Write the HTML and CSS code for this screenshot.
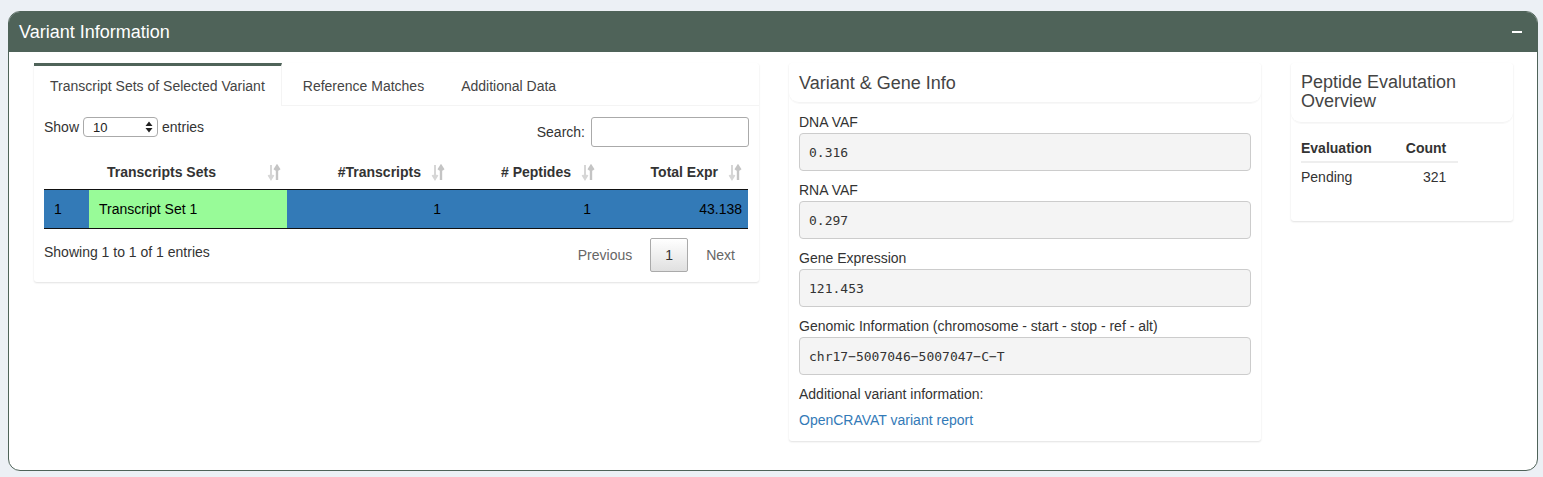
FILE: index.html
```html
<!DOCTYPE html>
<html>
<head>
<meta charset="utf-8">
<link rel="stylesheet" href="styles.css">
</head>
<body>
<div class="box">
  <div class="box-header">
    <h3 class="box-title">Variant Information</h3>
    <span class="collapse-btn"></span>
  </div>
  <div class="box-body">
    <div class="tabbox">
      <ul class="tabs">
        <li class="tab active">Transcript Sets of Selected Variant</li>
        <li class="tab">Reference Matches</li>
        <li class="tab">Additional Data</li>
      </ul>
      <div class="tab-content">
        <div class="dt-top">
          <div class="dt-length">Show <span class="select"><span>10</span><svg width="8" height="12" viewBox="0 0 8 12"><path d="M4 0.5 L7.5 5 H0.5 Z M4 11.5 L7.5 7 H0.5 Z" fill="#222"/></svg></span> entries</div>
          <div class="dt-search">Search: <span class="search-input"></span></div>
        </div>
        <table class="dt">
          <colgroup>
            <col class="c-idx"><col class="c-sets"><col class="c-tr"><col class="c-pep"><col class="c-expr">
          </colgroup>
          <thead>
            <tr>
              <th></th>
              <th class="left sort">Transcripts Sets<svg class="sorticon" width="14" height="17" viewBox="0 0 14 17"><path d="M4 1 V14 M1.5 11 L4 15 L6.5 11" stroke="#d6d6d6" stroke-width="2" fill="none"/><path d="M10 16 V3 M7.5 6 L10 2 L12.5 6" stroke="#c4c4c4" stroke-width="2.4" fill="none"/></svg></th>
              <th class="sort">#Transcripts<svg class="sorticon" width="14" height="17" viewBox="0 0 14 17"><path d="M4 1 V14 M1.5 11 L4 15 L6.5 11" stroke="#d6d6d6" stroke-width="2" fill="none"/><path d="M10 16 V3 M7.5 6 L10 2 L12.5 6" stroke="#c4c4c4" stroke-width="2.4" fill="none"/></svg></th>
              <th class="sort"># Peptides<svg class="sorticon" width="14" height="17" viewBox="0 0 14 17"><path d="M4 1 V14 M1.5 11 L4 15 L6.5 11" stroke="#d6d6d6" stroke-width="2" fill="none"/><path d="M10 16 V3 M7.5 6 L10 2 L12.5 6" stroke="#c4c4c4" stroke-width="2.4" fill="none"/></svg></th>
              <th class="sort">Total Expr<svg class="sorticon" width="14" height="17" viewBox="0 0 14 17"><path d="M4 1 V14 M1.5 11 L4 15 L6.5 11" stroke="#d6d6d6" stroke-width="2" fill="none"/><path d="M10 16 V3 M7.5 6 L10 2 L12.5 6" stroke="#c4c4c4" stroke-width="2.4" fill="none"/></svg></th>
            </tr>
          </thead>
          <tbody>
            <tr class="selected">
              <td class="left">1</td>
              <td class="left green">Transcript Set 1</td>
              <td>1</td>
              <td>1</td>
              <td class="last">43.138</td>
            </tr>
          </tbody>
        </table>
        <div class="dt-bottom">
          <div class="dt-info">Showing 1 to 1 of 1 entries</div>
          <div class="pager">
            <span class="pg disabled">Previous</span>
            <span class="pg current">1</span>
            <span class="pg disabled">Next</span>
          </div>
        </div>
      </div>
    </div>

    <div class="card">
      <div class="card-header"><h3 class="card-title">Variant &amp; Gene Info</h3></div>
      <div class="card-body">
        <div class="field">
          <label>DNA VAF</label>
          <div class="ro">0.316</div>
        </div>
        <div class="field">
          <label>RNA VAF</label>
          <div class="ro">0.297</div>
        </div>
        <div class="field">
          <label>Gene Expression</label>
          <div class="ro">121.453</div>
        </div>
        <div class="field">
          <label>Genomic Information (chromosome - start - stop - ref - alt)</label>
          <div class="ro">chr17−5007046−5007047−C−T</div>
        </div>
        <p class="addl">Additional variant information:</p>
        <a class="link" href="#">OpenCRAVAT variant report</a>
      </div>
    </div>

    <div class="card card-small">
      <div class="card-header"><h3 class="card-title">Peptide Evalutation Overview</h3></div>
      <div class="card-body">
        <table class="eval">
          <thead><tr><th class="l">Evaluation</th><th class="r">Count</th></tr></thead>
          <tbody><tr><td class="l">Pending</td><td class="r">321</td></tr></tbody>
        </table>
      </div>
    </div>
  </div>
</div>
</body>
</html>
```
FILE: styles.css
```css
* { box-sizing: border-box; }
html, body { margin: 0; padding: 0; }
body {
  background: #ecf0f5;
  font-family: "Liberation Sans", Arial, sans-serif;
  font-size: 14px;
  color: #333;
  padding: 11px 5px 0 8px;
}
.box {
  border: 1px solid #4f6359;
  border-radius: 12px;
  background: #fff;
  height: 460px;
  overflow: hidden;
}
.box-header {
  background: #4f6359;
  height: 40px;
  display: flex;
  align-items: center;
  justify-content: space-between;
  padding: 0 15px 0 10px;
}
.box-title {
  margin: 0;
  font-weight: normal;
  font-size: 18px;
  color: #fff;
  line-height: 20px;
}
.collapse-btn {
  width: 10px;
  height: 2px;
  background: #fff;
  display: block;
}
.box-body {
  display: grid;
  grid-template-columns: 725px 472px 222px;
  column-gap: 30px;
  align-items: start;
  padding: 11px 25px 0 25px;
}
/* tab box */
.tabbox {
  background: #fff;
  box-shadow: 0 1px 2px rgba(0,0,0,0.12);
  border-radius: 3px;
}
.tabs {
  list-style: none;
  margin: 0;
  padding: 0;
  display: flex;
  border-bottom: 1px solid #f4f4f4;
}
.tab {
  margin-right: 5px;
  padding: 11px 16px 10px 16px;
  border-top: 3px solid transparent;
  color: #444;
  line-height: 18px;
  font-size: 14px;
}
.tab.active {
  border-top-color: #4f6359;
  border-right: 1px solid #f4f4f4;
  margin-bottom: -1px;
  background: #fff;
  padding-bottom: 11px;
}
.tab-content {
  padding: 10px 10px 10px 10px;
}
.dt-top {
  display: flex;
  justify-content: space-between;
  align-items: flex-start;
  height: 40px;
}
.dt-length {
  display: flex;
  align-items: center;
  gap: 4px;
  margin-top: 1px;
}
.select {
  width: 75px;
  height: 20px;
  border: 1px solid #aaa;
  border-radius: 4px;
  display: inline-flex;
  align-items: center;
  justify-content: space-between;
  padding: 0 4px 0 9px;
  font-size: 13px;
  color: #222;
}
.dt-search {
  display: flex;
  align-items: center;
  gap: 6px;
  margin-top: 1px;
}
.search-input {
  display: block;
  width: 158px;
  height: 30px;
  border: 1px solid #aaa;
  border-radius: 3px;
}
.dt {
  width: 704px;
  border-collapse: collapse;
  table-layout: fixed;
}
.c-idx { width: 45px; }
.c-sets { width: 198px; }
.c-tr { width: 164px; }
.c-pep { width: 150px; }
.c-expr { width: 147px; }
.dt th {
  font-weight: bold;
  color: #333;
  text-align: right;
  padding: 6px 30px 6px 10px;
  height: 33px;
  border-bottom: 1px solid #111;
  position: relative;
  line-height: 20px;
}
.dt th.left { text-align: left; padding-left: 18px; }
.sorticon {
  position: absolute;
  right: 6px;
  top: 8px;
}
.dt td {
  text-align: right;
  padding: 9px 10px;
  height: 39px;
  line-height: 20px;
  color: #000;
  border-bottom: 1px solid #111;
}
.dt td.left { text-align: left; }
.dt td.last { padding-right: 6px; }
.selected td { background: #337ab7; }
.selected td.green { background: #98fb98; }
.dt-bottom {
  display: flex;
  justify-content: space-between;
  align-items: flex-start;
  padding-top: 9px;
}
.dt-info { margin-top: 4px; line-height: 20px; }
.pager {
  display: flex;
  align-items: center;
}
.pg {
  padding: 0 16px;
  color: #666;
  line-height: 20px;
}
.pg.current {
  width: 38px;
  height: 34px;
  border: 1px solid #aaa;
  border-radius: 2px;
  background: linear-gradient(#fff, #e0e0e0);
  display: flex;
  align-items: center;
  justify-content: center;
  padding: 0;
  color: #333;
  margin: 0 2px;
}
.pg:last-child { padding-right: 14px; }
/* cards */
.card {
  background: #fff;
  box-shadow: 0 1px 2px rgba(0,0,0,0.12);
  border-radius: 3px;
}
.card-header {
  border-bottom: 1px solid #f4f4f4;
  border-radius: 0 0 10px 10px;
  box-shadow: 0 1px 1px rgba(0,0,0,0.03);
  padding: 10px 10px 9px 10px;
}
.card-title {
  margin: 0;
  font-weight: normal;
  font-size: 18px;
  line-height: 20px;
  color: #444;
}
.card-body {
  padding: 9px 10px 11px 10px;
}
.field { margin-bottom: 9px; }
.field label {
  display: block;
  line-height: 20px;
  margin-bottom: 1px;
  color: #333;
}
.ro {
  height: 38px;
  border: 1px solid #ccc;
  border-radius: 4px;
  background: #f4f4f4;
  font-family: "DejaVu Sans Mono", monospace;
  font-size: 13px;
  color: #333;
  padding: 0 9px;
  display: flex;
  align-items: center;
}
.addl {
  margin: 7px 0 0 0;
  line-height: 20px;
}
.link {
  display: block;
  margin-top: 6px;
  line-height: 20px;
  color: #337ab7;
  text-decoration: none;
}
.card-small .card-header { padding: 10px 10px 11px 10px; }
.card-small .card-title { line-height: 19px; }
.card-small .card-body { padding: 11px 10px 29px 10px; }
.eval {
  border-collapse: collapse;
}
.eval th {
  font-weight: bold;
  padding: 5px 12px 4px 0;
  border-bottom: 2px solid #eee;
  line-height: 18px;
  text-align: left;
}
.eval td {
  padding: 5px 12px 6px 0;
  line-height: 18px;
}
.eval .l { text-align: left; padding-left: 0; padding-right: 34px; }
.eval td.r { text-align: right; }
```
